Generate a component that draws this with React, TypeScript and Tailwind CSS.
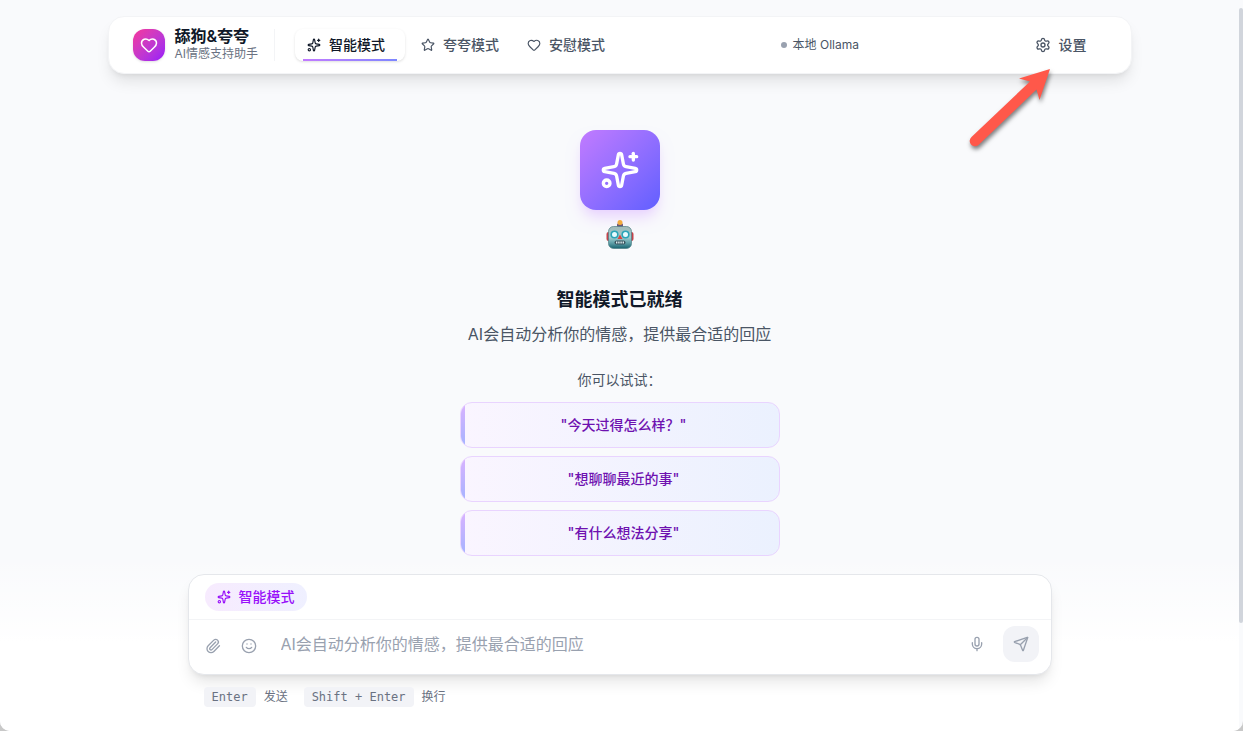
import { useState } from 'react';
import type { ReactNode } from 'react';
import { Heart, Mic, Paperclip, Send, Settings, Smile, Sparkles, Star } from 'lucide-react';

type Mode = 'smart' | 'praise' | 'comfort';

const modes: { id: Mode; label: string; icon: ReactNode }[] = [
  { id: 'smart', label: '智能模式', icon: <Sparkles size={14} /> },
  { id: 'praise', label: '夸夸模式', icon: <Star size={14} /> },
  { id: 'comfort', label: '安慰模式', icon: <Heart size={14} /> },
];

const suggestions = ['今天过得怎么样？', '想聊聊最近的事', '有什么想法分享'];

// 指向设置按钮的箭头
function PointerArrow() {
  return (
    <svg
      className="absolute right-20 top-full -mt-2 pointer-events-none z-10 drop-shadow-[1px_3px_2px_rgba(0,0,0,0.5)]"
      width="90"
      height="90"
      viewBox="960 65 90 90"
      fill="#ff584a"
      aria-hidden="true"
    >
      <path d="M1049 69 L1018 78.5 L1029 81.5 L970.5 137 A5 5 0 0 0 977.5 145 L1035.5 89.5 L1038.5 100 Z" />
    </svg>
  );
}

// 机器人表情
function Robot() {
  return (
    <svg width="32" height="32" viewBox="0 0 32 32" aria-label="机器人" role="img">
      <defs>
        <linearGradient id="robot-face" x1="0" y1="0" x2="0" y2="1">
          <stop offset="0" stopColor="#a3b9b8" />
          <stop offset="0.5" stopColor="#9fcccf" />
          <stop offset="0.75" stopColor="#5fa0a8" />
          <stop offset="1" stopColor="#17626f" />
        </linearGradient>
      </defs>
      <rect x="2.5" y="14" width="4" height="9" rx="2" fill="#c4424a" />
      <rect x="25.5" y="14" width="4" height="9" rx="2" fill="#c4424a" />
      <rect x="13" y="5.5" width="6" height="3.5" rx="1" fill="#6b5577" />
      <circle cx="16" cy="4.5" r="2.5" fill="#f3a93c" />
      <rect x="4.5" y="8.5" width="23" height="22" rx="5" fill="url(#robot-face)" stroke="#4f8085" strokeWidth="0.7" />
      <circle cx="10.5" cy="16.5" r="3.3" fill="#e6fbff" stroke="#2ba4b8" strokeWidth="1.6" />
      <circle cx="21.5" cy="16.5" r="3.3" fill="#e6fbff" stroke="#2ba4b8" strokeWidth="1.6" />
      <path d="M16 16.5l2.5 4.5h-5z" fill="#d8443e" />
      <rect x="10.5" y="22.5" width="11" height="4" rx="2" fill="#3a5560" />
      <path d="M12 24.5h8" stroke="#dceef0" strokeWidth="2" strokeDasharray="1.4 .8" />
    </svg>
  );
}

function Header({ mode, onModeChange }: { mode: Mode; onModeChange: (mode: Mode) => void }) {
  return (
    <header className="relative w-full max-w-5xl mx-auto h-[58px] px-6 flex items-center rounded-2xl border border-gray-100 bg-white shadow-lg">
      {/* Logo */}
      <div className="flex items-center gap-2.5 h-8 pr-4 border-r border-gray-100">
        <div className="w-8 h-8 rounded-xl bg-linear-to-br from-pink-500 to-purple-600 flex items-center justify-center shadow-sm">
          <Heart size={18} className="text-white" />
        </div>
        <div className="pb-0.5">
          <h1 className="text-base leading-5 font-semibold text-gray-900">舔狗&amp;夸夸</h1>
          <p className="text-xs leading-4 text-gray-500">AI情感支持助手</p>
        </div>
      </div>

      {/* 模式切换 */}
      <nav className="flex items-center gap-1 ml-5">
        {modes.map((item) => (
          <button
            key={item.id}
            onClick={() => onModeChange(item.id)}
            className={`relative h-8 flex items-center gap-2 rounded-lg text-sm font-medium ${
              mode === item.id ? 'pl-3 pr-5 bg-white text-gray-900 shadow-sm' : 'px-3 text-gray-600'
            }`}
          >
            {item.icon}
            {item.label}
            {mode === item.id && (
              <span className="absolute bottom-0 inset-x-2 h-0.5 bg-linear-to-r from-purple-400 to-indigo-400" />
            )}
          </button>
        ))}
      </nav>

      {/* 模型状态 */}
      <div className="flex-1 flex items-center justify-center gap-1.5 text-xs text-gray-600">
        <span className="w-1.5 h-1.5 rounded-full bg-gray-400" />
        本地 Ollama
      </div>

      <button className="h-8 pl-3 pr-5 flex items-center gap-2 text-sm font-medium text-gray-600">
        <Settings size={16} />
        设置
      </button>
      <PointerArrow />
    </header>
  );
}

function Welcome() {
  return (
    <main className="flex-1 flex flex-col items-center pt-14 text-center">
      <div className="w-20 h-20 rounded-2xl bg-linear-to-br from-purple-400 to-indigo-500 flex items-center justify-center shadow-lg shadow-purple-200">
        <Sparkles size={40} className="text-white" />
      </div>
      <div className="mt-2">
        <Robot />
      </div>
      <h2 className="mt-9 text-lg leading-7 font-semibold text-gray-900">智能模式已就绪</h2>
      <p className="mt-2 text-base leading-6 text-gray-600">AI会自动分析你的情感，提供最合适的回应</p>
      <p className="mt-6 text-sm leading-5 text-gray-600">你可以试试：</p>
      <div className="mt-3 w-full max-w-80 flex flex-col gap-2">
        {suggestions.map((text) => (
          <button
            key={text}
            className="relative overflow-hidden h-[46px] pl-5 pr-3 rounded-xl border border-purple-200 bg-linear-to-r from-purple-50 to-[#ebf1fe] text-sm font-medium text-purple-800"
          >
            <span className="absolute left-0 inset-y-0 w-1 bg-linear-to-b from-purple-300 to-indigo-300" />
            "{text}"
          </button>
        ))}
      </div>
    </main>
  );
}

function Composer() {
  const [message, setMessage] = useState('');

  return (
    <footer className="px-4 pt-[18px] pb-6 bg-linear-to-t from-white from-50% to-transparent">
      <div className="max-w-[864px] mx-auto">
        <form
          onSubmit={(e) => e.preventDefault()}
          className="rounded-2xl border border-gray-200 bg-white shadow-lg"
        >
          <div className="px-4 py-2 flex border-b border-gray-100">
            <span className="h-7 px-3 flex items-center gap-2 rounded-full bg-linear-to-r from-[#f7ebfe] to-[#eff0ff] text-sm font-medium text-purple-600">
              <Sparkles size={14} />
              智能模式
            </span>
          </div>
          <div className="flex items-center pl-2 pr-3 pt-1.5 pb-3">
            <div className="self-end flex gap-1 text-gray-400">
              <button type="button" aria-label="附件" className="w-8 h-8 flex items-center justify-center">
                <Paperclip size={16} />
              </button>
              <button type="button" aria-label="表情" className="w-8 h-8 flex items-center justify-center">
                <Smile size={16} />
              </button>
            </div>
            <input
              type="text"
              aria-label="消息"
              value={message}
              onChange={(e) => setMessage(e.target.value)}
              placeholder="AI会自动分析你的情感，提供最合适的回应"
              className="flex-1 min-w-0 mx-4 h-6 text-base text-gray-900 placeholder-gray-400 outline-none"
            />
            <button type="button" aria-label="语音" className="w-8 h-8 flex items-center justify-center text-gray-400">
              <Mic size={16} />
            </button>
            <button
              type="submit"
              aria-label="发送"
              className="ml-2.5 w-9 h-9 flex items-center justify-center rounded-xl bg-[#f2f3f7] text-gray-400"
            >
              <Send size={16} />
            </button>
          </div>
        </form>

        {/* 快捷键提示 */}
        <div className="mt-3 px-4 flex items-center gap-4 text-xs text-gray-500">
          <span className="flex items-center gap-2">
            <kbd className="h-5 px-2 flex items-center rounded-sm bg-[#f2f3f7] font-['DejaVu_Sans_Mono',monospace]">Enter</kbd>
            发送
          </span>
          <span className="flex items-center gap-2">
            <kbd className="h-5 px-2 flex items-center rounded-sm bg-[#f2f3f7] font-['DejaVu_Sans_Mono',monospace]">Shift + Enter</kbd>
            换行
          </span>
        </div>
      </div>
    </footer>
  );
}

function App() {
  const [mode, setMode] = useState<Mode>('smart');

  return (
    <div className="min-h-screen flex bg-[#c8c8c8] font-['Inter','Noto_Sans_CJK_SC',sans-serif]">
      <div className="flex-1 flex rounded-b-[10px] bg-[#f9fafc] overflow-hidden">
        <div className="flex-1 min-w-0 flex flex-col pt-4">
          <Header mode={mode} onModeChange={setMode} />
          <Welcome />
          <Composer />
        </div>
        {/* 滚动条 */}
        <div className="w-1 pt-2 flex flex-col">
          <div className="basis-[85%] rounded-full bg-gray-300" />
        </div>
      </div>
    </div>
  );
}

export default App;
